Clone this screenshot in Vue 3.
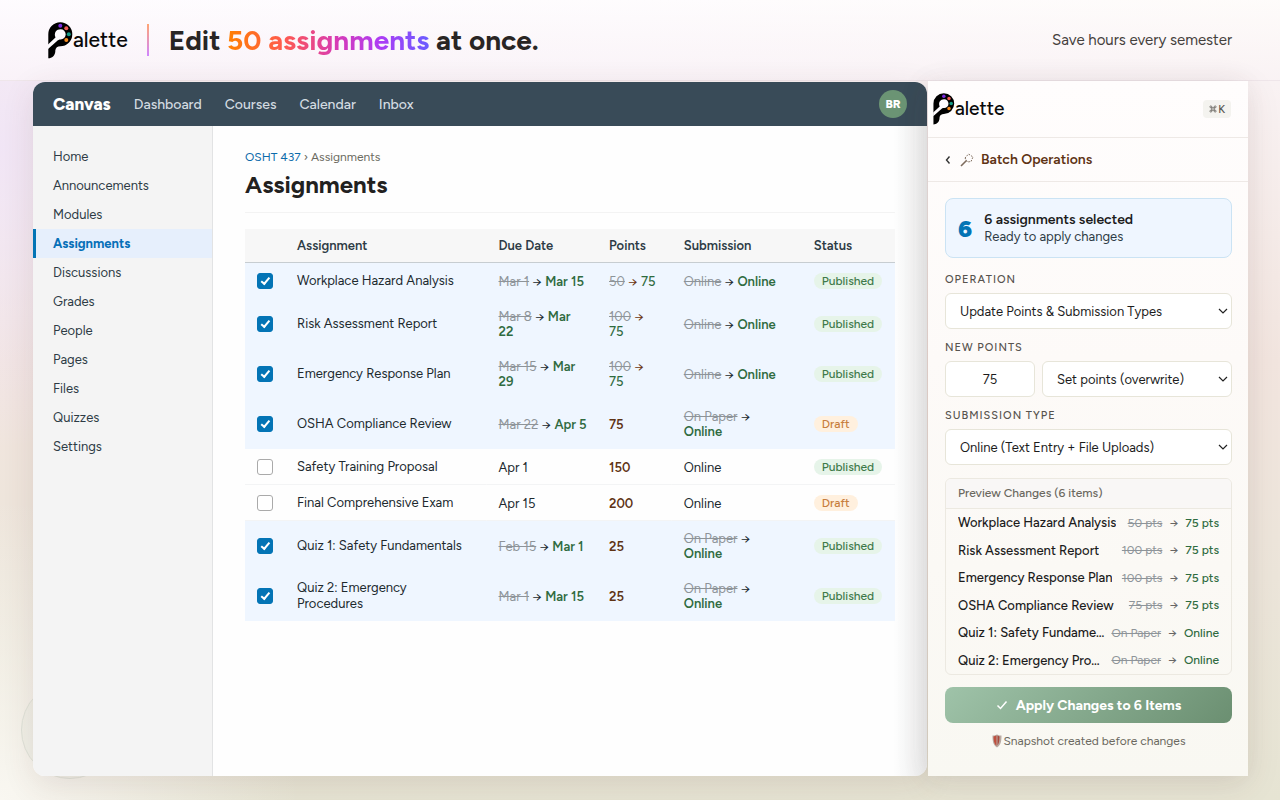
<script setup>
import { reactive, ref } from 'vue'

const navLinks = ['Dashboard', 'Courses', 'Calendar', 'Inbox']
const sideLinks = ['Home', 'Announcements', 'Modules', 'Assignments', 'Discussions', 'Grades', 'People', 'Pages', 'Files', 'Quizzes', 'Settings']

const rows = reactive([
  { name: 'Workplace Hazard Analysis', due: ['Mar 1', 'Mar 15'], pts: ['50', '75'], sub: ['Online', 'Online'], status: 'Published', on: true },
  { name: 'Risk Assessment Report', due: ['Mar 8', 'Mar 22'], pts: ['100', '75'], sub: ['Online', 'Online'], status: 'Published', on: true },
  { name: 'Emergency Response Plan', due: ['Mar 15', 'Mar 29'], pts: ['100', '75'], sub: ['Online', 'Online'], status: 'Published', on: true },
  { name: 'OSHA Compliance Review', due: ['Mar 22', 'Apr 5'], pts: ['75'], sub: ['On Paper', 'Online'], status: 'Draft', on: true },
  { name: 'Safety Training Proposal', due: ['Apr 1'], pts: ['150'], sub: ['Online'], status: 'Published', on: false },
  { name: 'Final Comprehensive Exam', due: ['Apr 15'], pts: ['200'], sub: ['Online'], status: 'Draft', on: false },
  { name: 'Quiz 1: Safety Fundamentals', due: ['Feb 15', 'Mar 1'], pts: ['25'], sub: ['On Paper', 'Online'], status: 'Published', on: true },
  { name: 'Quiz 2: Emergency Procedures', due: ['Mar 1', 'Mar 15'], pts: ['25'], sub: ['On Paper', 'Online'], status: 'Published', on: true }
])

const preview = [
  ['Workplace Hazard Analysis', '50 pts', '75 pts'],
  ['Risk Assessment Report', '100 pts', '75 pts'],
  ['Emergency Response Plan', '100 pts', '75 pts'],
  ['OSHA Compliance Review', '75 pts', '75 pts'],
  ['Quiz 1: Safety Fundamentals', 'On Paper', 'Online'],
  ['Quiz 2: Emergency Procedures', 'On Paper', 'Online']
]
const points = ref('75')
</script>

<template>
  <div class="page">
    <div class="ring"></div>
    <header class="top">
      <div class="logo big">
        <svg viewBox="0 0 25 37" aria-hidden="true">
          <path d="M0.300 12.200A12 12 0 1 1 12.300 24.200C9.500 24.200 7.600 25.600 7.300 28.500V29.500C7 33.500 4 36.300 0.300 36.300z" />
          <path class="cut" d="M0 22.500 7.500 15.500C5.500 10.500 8.500 7.200 12.600 7.200a5 5 0 0 1 0 10.200C11 17.400 10 17.800 8.500 19.500L0 27z" />
          <circle cx="12.300" cy="3.800" r="2" fill="#7c2be0" /><circle cx="18.300" cy="6.300" r="2" fill="#ee5a55" />
          <circle cx="20.800" cy="12.200" r="2" fill="#149c86" /><circle cx="18.300" cy="18" r="2" fill="#f58a1f" />
        </svg>
        <span>alette</span>
      </div>
      <div class="divider"></div>
      <h1>Edit <em>50 assignments</em> at once.</h1>
      <p>Save hours every semester</p>
    </header>

    <main class="stage">
      <section class="canvas">
        <nav class="bar">
          <strong>Canvas</strong>
          <a v-for="l in navLinks" :key="l" href="#">{{ l }}</a>
          <span class="avatar">BR</span>
        </nav>
        <div class="body">
          <aside>
            <a v-for="l in sideLinks" :key="l" href="#" :class="{ active: l === 'Assignments' }">{{ l }}</a>
          </aside>
          <div class="content">
            <div class="crumb"><a href="#">OSHT 437</a> › Assignments</div>
            <h2>Assignments</h2>
            <table>
              <colgroup><col class="c0" /><col class="c1" /><col class="c2" /><col class="c3" /><col class="c4" /><col /></colgroup>
              <thead>
                <tr><th></th><th>Assignment</th><th>Due Date</th><th>Points</th><th>Submission</th><th>Status</th></tr>
              </thead>
              <tbody>
                <tr v-for="r in rows" :key="r.name" :class="{ on: r.on }">
                  <td class="tick"><input v-model="r.on" type="checkbox" :aria-label="r.name" /></td>
                  <td class="name">{{ r.name }}</td>
                  <td class="due">
                    <template v-if="r.due[1]"><del>{{ r.due[0] }}</del> → <ins>{{ r.due[1] }}</ins></template>
                    <span v-else class="plain">{{ r.due[0] }}</span>
                  </td>
                  <td class="pts">
                    <template v-if="r.pts[1]"><del>{{ r.pts[0] }}</del> → <ins>{{ r.pts[1] }}</ins></template>
                    <b v-else>{{ r.pts[0] }}</b>
                  </td>
                  <td>
                    <template v-if="r.sub[1]"><del>{{ r.sub[0] }}</del> → <ins>{{ r.sub[1] }}</ins></template>
                    <span v-else class="plain">{{ r.sub[0] }}</span>
                  </td>
                  <td class="state"><span class="pill" :class="r.status.toLowerCase()">{{ r.status }}</span></td>
                </tr>
              </tbody>
            </table>
          </div>
        </div>
      </section>

      <section class="panel">
        <div class="phead">
          <div class="logo">
            <svg viewBox="0 0 25 37" aria-hidden="true">
              <path d="M0.300 12.200A12 12 0 1 1 12.300 24.200C9.500 24.200 7.600 25.600 7.300 28.500V29.500C7 33.500 4 36.300 0.300 36.300z" />
              <path class="cut" d="M0 22.500 7.500 15.500C5.500 10.500 8.500 7.200 12.600 7.200a5 5 0 0 1 0 10.200C11 17.400 10 17.800 8.500 19.500L0 27z" />
              <circle cx="12.300" cy="3.800" r="2" fill="#7c2be0" /><circle cx="18.300" cy="6.300" r="2" fill="#ee5a55" />
              <circle cx="20.800" cy="12.200" r="2" fill="#149c86" /><circle cx="18.300" cy="18" r="2" fill="#f58a1f" />
            </svg>
            <span>alette</span>
          </div>
          <kbd><svg viewBox="0 0 10 10" aria-hidden="true"><path d="M3.500 3.500h3v3h-3zM3.500 3.500H2.300A1.200 1.200 0 1 1 3.500 2.300zM6.500 3.500V2.300A1.200 1.200 0 1 1 7.700 3.500zM6.500 6.500h1.200A1.200 1.200 0 1 1 6.500 7.700zM3.500 6.500v1.200A1.200 1.200 0 1 1 2.300 6.500z" /></svg>K</kbd>
        </div>
        <div class="psub">
          <button class="back" type="button" aria-label="Back">
            <svg viewBox="0 0 6 10" aria-hidden="true"><path d="M4.500 1.500 1.500 5l3 3.500" /></svg>
          </button>
          <svg class="wand" viewBox="0 0 14 14" aria-hidden="true">
            <path d="M1 13 6.500 7.500" stroke-width="1.600" />
            <path d="M5 5 8.500 1l4.500 3-2 4.500-3.500.500z" stroke-dasharray="1.600 1.200" />
          </svg>
          <h3>Batch Operations</h3>
        </div>
        <form class="pbody" @submit.prevent>
          <div class="info">
            <b class="num">6</b>
            <div><strong>6 assignments selected</strong><span>Ready to apply changes</span></div>
          </div>
          <label for="op">Operation</label>
          <div class="sel"><select id="op"><option>Update Points &amp; Submission Types</option></select>
            <svg viewBox="0 0 10 6" aria-hidden="true"><path d="M1 1l4 4 4-4" /></svg></div>
          <label for="pts">New Points</label>
          <div class="pair">
            <input id="pts" v-model="points" type="text" />
            <div class="sel"><select aria-label="Points mode"><option>Set points (overwrite)</option></select>
              <svg viewBox="0 0 10 6" aria-hidden="true"><path d="M1 1l4 4 4-4" /></svg></div>
          </div>
          <label for="sub">Submission Type</label>
          <div class="sel"><select id="sub"><option>Online (Text Entry + File Uploads)</option></select>
            <svg viewBox="0 0 10 6" aria-hidden="true"><path d="M1 1l4 4 4-4" /></svg></div>
          <div class="preview">
            <h4>Preview Changes (6 items)</h4>
            <ul>
              <li v-for="p in preview" :key="p[0]">
                <span class="pn">{{ p[0] }}</span>
                <span class="chg"><del>{{ p[1] }}</del><i>→</i><ins>{{ p[2] }}</ins></span>
              </li>
            </ul>
          </div>
          <button class="apply" type="submit">
            <svg viewBox="0 0 12 10" aria-hidden="true"><path d="M1.500 5.500 4.500 8.500 10.500 1.500" /></svg>
            Apply Changes to 6 Items
          </button>
          <div class="note">
            <svg viewBox="0 0 10 14" aria-hidden="true">
              <path d="M.500 1.500C3 1.500 4 1 5 .500c1 .500 2 1 4.500 1C9.500 7 9 11 5 13.500 1 11 .500 7 .500 1.500z" fill="#b9aaa2" />
              <path d="M1.500 2.500 4.500 1.500v10.500C2 10 1.500 6 1.500 2.500z" fill="#c0503f" />
              <path d="M5.500 1.500 7.500 2.500c0 4-.500 7-2 9z" fill="#a8493c" />
            </svg>Snapshot created before changes
          </div>
        </form>
      </section>
    </main>
  </div>
</template>

<style>
body { margin: 0; }
</style>

<style scoped>
* { box-sizing: border-box; }
.page {
  min-height: 100vh; display: flex; flex-direction: column; position: relative; overflow: hidden;
  font-family: Figtree, Inter, "Liberation Sans", sans-serif; font-size: 13px; color: #20292e;
  background:
    radial-gradient(ellipse 200px 300px at 0 150px, rgba(240, 228, 246, .9), transparent),
    radial-gradient(ellipse 300px 300px at 0 800px, rgba(250, 248, 243, .95), transparent),
    linear-gradient(180deg, #fbf6f9 0, #f2e5df 45%, #ece5da 72%, #e6e4d3 100%);
}
.ring { position: absolute; left: 21px; bottom: 21px; width: 98px; height: 98px; border: 1px solid #dfe2d8; border-radius: 50%; background: rgba(220, 228, 214, .2); }
a { text-decoration: none; color: inherit; }
h1, h2, h3, h4, p, ul { margin: 0; padding: 0; }
.top {
  height: 81px; display: flex; align-items: center; padding: 0 48px; position: relative; border-bottom: 1px solid #efe6ea;
  background: linear-gradient(180deg, rgba(255,255,255,.5), rgba(246,237,243,.5)), linear-gradient(95deg, #fdf8fe, #fdf9fc 50%, #fdf8f5);
}
.logo { display: flex; align-items: center; font-weight: 500; font-size: 19px; line-height: 32px; color: #0a0a0a; font-variant-ligatures: none; }
.logo svg { width: 22px; height: 32px; }
.logo .cut { fill: #fefbfe; }
.logo.big { font-size: 21px; }
.logo.big svg { width: 25px; height: 37px; }
.divider { width: 2px; height: 32px; margin: 0 20px 0 19px; background: linear-gradient(#ffa573, #cf86ff); }
.top h1 { font-size: 28px; font-weight: 700; line-height: 32px; color: #292524; }
.top em { font-style: normal; color: transparent; background: linear-gradient(90deg, #ff8000, #ff5a4e 28%, #d63ab8 55%, #ad3cf5 76%, #6a5cff); -webkit-background-clip: text; background-clip: text; }
.top p { margin-left: auto; font-size: 15px; color: #44403c; }
.stage { flex: 1; display: flex; padding: 0 32px 24px 33px; position: relative; }
.canvas { flex: 1; min-width: 0; margin-top: 1px; margin-right: 1px; display: flex; flex-direction: column; border-radius: 12px; overflow: hidden; background: #fefefe; box-shadow: 0 8px 32px rgba(90, 50, 50, .12); }
.bar { height: 44px; display: flex; align-items: center; gap: 23px; padding: 0 20px; background: #394b58; color: #d3dbe1; }
.bar strong { font-size: 17px; color: #fff; font-weight: 800; }
.bar a { font-size: 14px; font-weight: 500; }
.avatar { margin-left: auto; width: 28px; height: 28px; border-radius: 50%; background: #6b9474; color: #fff; font-size: 12px; font-weight: 800; display: grid; place-items: center; }
.body { flex: 1; display: flex; }
aside { width: 180px; padding: 16px 0; background: #f4f4f4; border-right: 1px solid #e2e3e4; }
aside a { display: block; line-height: 29px; padding: 0 20px; color: #2d3b45; }
aside a.active { color: #0770b8; font-weight: 700; background: #e6effc; box-shadow: inset 3px 0 #0374b5; }
.content { flex: 1; min-width: 0; padding: 24px 32px; background: linear-gradient(90deg, transparent calc(100% - 34px), #eeefef); }
.crumb { font-size: 12px; line-height: 15px; color: #6b6a60; }
.crumb a { color: #0b6bab; }
h2 { font-size: 24px; line-height: 28px; color: #22211f; padding: 6px 0 13px; border-bottom: 1px solid #f3f3f3; margin-bottom: 16px; }
table { width: 100%; table-layout: fixed; border-collapse: separate; border-spacing: 0; font-size: 13px; line-height: 15px; }
.c0 { width: 40px; } .c1 { width: 31%; } .c2 { width: 17%; } .c3 { width: 11.5%; } .c4 { width: 20%; }
th { height: 34px; padding: 0 12px; text-align: left; font-weight: 600; background: #f7f7f7; border-bottom: 1px solid #c7cdd1; color: #2d3b45; }
td { height: 36px; padding: 10px 12px; vertical-align: middle; background-image: linear-gradient(#f3f4f5, #f3f4f5); background-size: 100% 1px; background-repeat: no-repeat; background-position: bottom; }
tr.on td { background-color: #eff6ff; background-image: none; }
.name { line-height: 16px; padding: 8px 12px; }
.tick, .state { padding: 8px 0 8px 12px; }
.due { padding-right: 10px; }
.pts { color: #6b3410; padding-right: 14px; }
.pts b { font-weight: 600; color: #5e3314; }
.pts ins { font-weight: 500; }
del { color: #8e9499; }
ins { color: #2f6b3f; font-weight: 600; text-decoration: none; }
.plain { color: #20292e; }
td input { appearance: none; display: block; width: 16px; height: 16px; margin: 0; border: 1px solid #aaa; border-radius: 3px; background: #fff; }
td input:checked { border-color: #0374b5; background: #0374b5; display: grid; place-items: center; }
td input:checked::after { content: ""; width: 3px; height: 7px; border: solid #fff; border-width: 0 2px 2px 0; transform: rotate(40deg) translate(-1px, -1px); }
.pill { display: block; width: fit-content; padding: 0 8px; border-radius: 8px; font-size: 12px; line-height: 16px; font-weight: 500; color: #3f7a4a; background: #e6f4e9; }
.pill.draft { color: #c77f3e; background: #fff0de; }

.panel { width: 320px; background: linear-gradient(#fffdfd, #fdfaf8 40%, #f9f8f2); box-shadow: -4px 0 24px rgba(60, 60, 60, .06), 0 8px 32px rgba(90, 50, 50, .1); }
.phead { height: 57px; display: flex; align-items: center; justify-content: space-between; padding: 0 17px 0 5px; border-bottom: 1px solid #eee9e6; }
kbd { display: flex; align-items: center; gap: 1px; height: 18px; padding: 0 6px; border-radius: 4px; background: #f4f3ef; color: #57534e; font: 500 11px Figtree, Inter, sans-serif; }
kbd svg { width: 8px; height: 8px; fill: none; stroke: #57534e; stroke-width: .9; }
.psub { height: 44px; display: flex; align-items: center; padding: 0 17px; border-bottom: 1px solid #eee9e6; }
.back { border: 0; padding: 0; background: none; width: 6px; height: 10px; display: flex; }
.back svg { width: 6px; height: 10px; fill: none; stroke: #333; stroke-width: 1.4; }
.wand { width: 14px; height: 14px; margin: 0 7px 0 9px; fill: none; stroke: #7d6b5c; stroke-width: 1; }
.psub h3 { font-size: 14px; font-weight: 600; color: #5e3314; }
.pbody { display: flex; flex-direction: column; padding: 16px 16px 24px 17px; }
.info { height: 60px; display: flex; align-items: center; gap: 12px; padding: 0 12px; margin-bottom: 13px; border: 1px solid #cbe3f4; border-radius: 8px; background: #eff6ff; line-height: 17px; }
.num { font-size: 24px; font-weight: 900; color: #0374b5; }
.info strong, .info span { display: block; }
.info strong { font-size: 14px; font-weight: 600; color: #1c1c1c; }
.info span { font-size: 13px; color: #2d3b45; }
label { font-size: 11px; line-height: 18px; font-weight: 500; text-transform: uppercase; letter-spacing: 1px; color: #57534e; margin-bottom: 4px; }
.sel { position: relative; margin-bottom: 10px; }
select, #pts { appearance: none; width: 100%; height: 36px; padding: 0 14px; border: 1px solid #e7e5d9; border-radius: 6px; background: #fff; font: 13px Figtree, Inter, sans-serif; color: #1c1c1c; }
.sel svg { position: absolute; right: 4px; top: 15px; width: 10px; height: 6px; fill: none; stroke: #222; stroke-width: 1.2; }
.pair { display: grid; grid-template-columns: 90px 1fr; gap: 7px; }
#pts { text-align: center; padding: 0; }
.preview { margin-top: 3px; border: 1px solid #ece9e1; border-radius: 6px; overflow: hidden; }
h4 { padding: 0 12px; font-size: 12px; line-height: 29px; font-weight: 500; color: #6b6860; background: #f9f7f6; border-bottom: 1px solid #ece9e1; }
ul { list-style: none; height: 165px; display: grid; }
li { min-width: 0; display: flex; align-items: center; justify-content: space-between; gap: 5px; padding: 0 12px; font-size: 12px; }
.pn { overflow: hidden; white-space: nowrap; text-overflow: ellipsis; font-size: 13px; font-weight: 500; color: #1c1c1c; }
.chg { display: flex; gap: 7px; white-space: nowrap; }
.chg i { font-style: normal; color: #666; }
.chg ins { font-weight: 500; }
.apply { height: 36px; margin-top: 12px; border: 0; border-radius: 8px; color: #fff; font: 700 14px Figtree, Inter, sans-serif; display: flex; align-items: center; justify-content: center; gap: 8px; background: linear-gradient(135deg, #9fc3a9, #6b8f71); }
.apply svg { width: 12px; height: 10px; fill: none; stroke: #fff; stroke-width: 1.5; }
.note { display: flex; justify-content: center; align-items: center; gap: 2px; margin-top: 10px; font-size: 12px; line-height: 16px; color: #6b6860; }
.note svg { width: 10px; height: 14px; }
</style>
